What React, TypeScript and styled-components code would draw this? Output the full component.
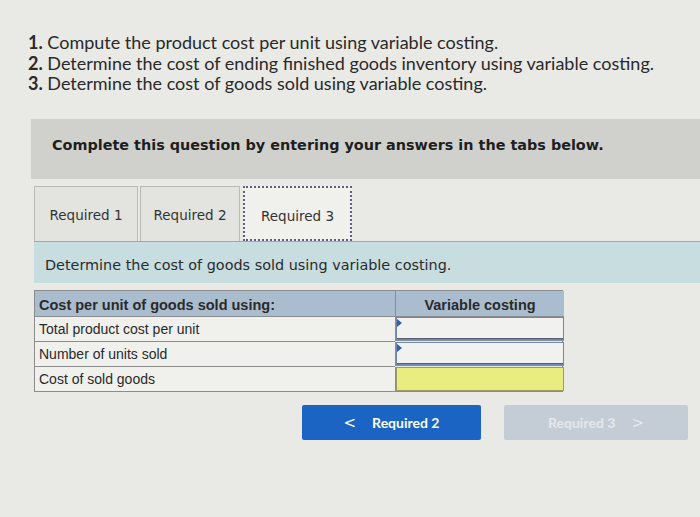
import React from "react";
import styled, { createGlobalStyle } from "styled-components";

const Global = createGlobalStyle`
  html, body { margin: 0; padding: 0; }
  body {
    background: #e9e9e6;
    width: 700px;
    height: 517px;
    overflow: hidden;
  }
`;

const Page = styled.div`
  display: flex;
  flex-direction: column;
  padding-top: 32px;
`;

const Steps = styled.ol`
  list-style: none;
  margin: 0 0 0 28px;
  padding: 0;
  font-family: Lato, "Open Sans", sans-serif;
  font-size: 18px;
  line-height: 20.7px;
  color: #2a2a2a;
`;

const Num = styled.b`
  font-weight: 700;
`;

const Banner = styled.div`
  margin: 25px 0 0 31px;
  height: 60px;
  box-sizing: border-box;
  padding: 0 0 8px 21px;
  background: #d0d0cd;
  display: flex;
  align-items: center;
  font-family: "DejaVu Sans", Verdana, sans-serif;
  font-weight: 700;
  font-size: 14.4px;
  color: #1e1e1e;
`;

const Work = styled.div`
  margin: 7px 0 0 34px;
  display: flex;
  flex-direction: column;
`;

const TabRow = styled.div`
  display: flex;
  gap: 2px;
  align-items: stretch;
  height: 55px;
`;

const Tab = styled.div<{ $active?: boolean; $w: number }>`
  width: ${(p) => p.$w}px;
  box-sizing: border-box;
  display: flex;
  align-items: center;
  justify-content: center;
  font-family: "DejaVu Sans", Verdana, sans-serif;
  font-size: 13.5px;
  color: #333;
  background: ${(p) => (p.$active ? "#f0f0ed" : "#e3e3df")};
  border: ${(p) => (p.$active ? "2px dotted #5d5d86" : "1px solid #b9b9b5")};
  border-bottom: ${(p) => (p.$active ? "2px dotted #5d5d86" : "none")};
  padding-top: ${(p) => (p.$active ? "4px" : "2px")};
  margin-left: ${(p) => (p.$active ? "1px" : "0")};
`;

const Prompt = styled.div`
  height: 42px;
  box-sizing: border-box;
  padding: 5px 0 0 11px;
  background: #c7dde0;
  border-top: 1px solid #9fa9aa;
  display: flex;
  align-items: center;
  font-family: "DejaVu Sans", Verdana, sans-serif;
  font-size: 14.4px;
  color: #2b2b2b;
`;

const Table = styled.div`
  margin-top: 7px;
  width: 529px;
  display: grid;
  grid-template-columns: 360px 169px;
  border: 1px solid #8c8c8c;
  font-family: "Liberation Sans", Arial, sans-serif;
  font-size: 14px;
  color: #2a2a2a;
  box-sizing: border-box;
`;

const HeadCell = styled.div<{ $center?: boolean }>`
  height: 26px;
  box-sizing: border-box;
  padding-top: 2px;
  background: #aabdcf;
  font-weight: 700;
  display: flex;
  align-items: center;
  justify-content: ${(p) => (p.$center ? "center" : "flex-start")};
  padding-left: ${(p) => (p.$center ? "0" : "4px")};
  border-left: ${(p) => (p.$center ? "1px solid #8c8c8c" : "none")};
  border-bottom: 1px solid #8c8c8c;
  font-size: 14.5px;
`;

const LabelCell = styled.div<{ $last?: boolean }>`
  height: 24px;
  display: flex;
  align-items: center;
  padding-left: 4px;
  background: #f0f0ed;
  border-bottom: ${(p) => (p.$last ? "none" : "1px solid #8c8c8c")};
`;

const InputCell = styled.div<{ $yellow?: boolean; $last?: boolean }>`
  position: relative;
  height: 24px;
  box-sizing: border-box;
  border-left: 1px solid #8c8c8c;
  border-bottom: ${(p) => (p.$last ? "none" : "1px solid #8c8c8c")};
  background: ${(p) => (p.$yellow ? "#e9ec7e" : "#f1f1f0")};
  box-shadow: ${(p) =>
    p.$yellow ? "inset 0 0 0 1px #9a9a6a" : "inset 0 0 0 1px #6f86b3, inset 0 -2px 0 #55627a"};
`;

const Flag = styled.span`
  position: absolute;
  left: 1px;
  top: 2px;
  width: 0;
  height: 0;
  border-top: 4px solid transparent;
  border-bottom: 4px solid transparent;
  border-left: 5px solid #2d5fb5;
`;

const Nav = styled.div`
  margin: 13px 0 0 268px;
  display: flex;
  gap: 23px;
`;

const NavButton = styled.div<{ $disabled?: boolean; $w: number }>`
  width: ${(p) => p.$w}px;
  height: 35px;
  border-radius: 2px;
  display: flex;
  align-items: center;
  justify-content: center;
  gap: 16px;
  font-family: Lato, "Open Sans", sans-serif;
  font-weight: 700;
  font-size: 14px;
  color: ${(p) => (p.$disabled ? "#e4e8ec" : "#ffffff")};
  background: ${(p) => (p.$disabled ? "#c4cdd5" : "#1b64c3")};
`;

const Chevron = styled.span`
  font-family: "DejaVu Sans", sans-serif;
  font-weight: 400;
  font-size: 15px;
`;

export default function App() {
  return (
    <>
      <Global />
      <Page>
        <Steps>
          <li>
            <Num>1.</Num> Compute the product cost per unit using variable costing.
          </li>
          <li>
            <Num>2.</Num> Determine the cost of ending finished goods inventory using variable costing.
          </li>
          <li>
            <Num>3.</Num> Determine the cost of goods sold using variable costing.
          </li>
        </Steps>
        <Banner>Complete this question by entering your answers in the tabs below.</Banner>
        <Work>
          <TabRow>
            <Tab $w={104}>Required 1</Tab>
            <Tab $w={100}>Required 2</Tab>
            <Tab $w={109} $active>
              Required 3
            </Tab>
          </TabRow>
          <Prompt>Determine the cost of goods sold using variable costing.</Prompt>
          <Table>
            <HeadCell>Cost per unit of goods sold using:</HeadCell>
            <HeadCell $center>Variable costing</HeadCell>
            <LabelCell>Total product cost per unit</LabelCell>
            <InputCell>
              <Flag />
            </InputCell>
            <LabelCell>Number of units sold</LabelCell>
            <InputCell>
              <Flag />
            </InputCell>
            <LabelCell $last>Cost of sold goods</LabelCell>
            <InputCell $yellow $last />
          </Table>
          <Nav>
            <NavButton $w={179}>
              <Chevron>&lt;</Chevron>
              <span>Required 2</span>
            </NavButton>
            <NavButton $w={184} $disabled>
              <span>Required 3</span>
              <Chevron>&gt;</Chevron>
            </NavButton>
          </Nav>
        </Work>
      </Page>
    </>
  );
}
